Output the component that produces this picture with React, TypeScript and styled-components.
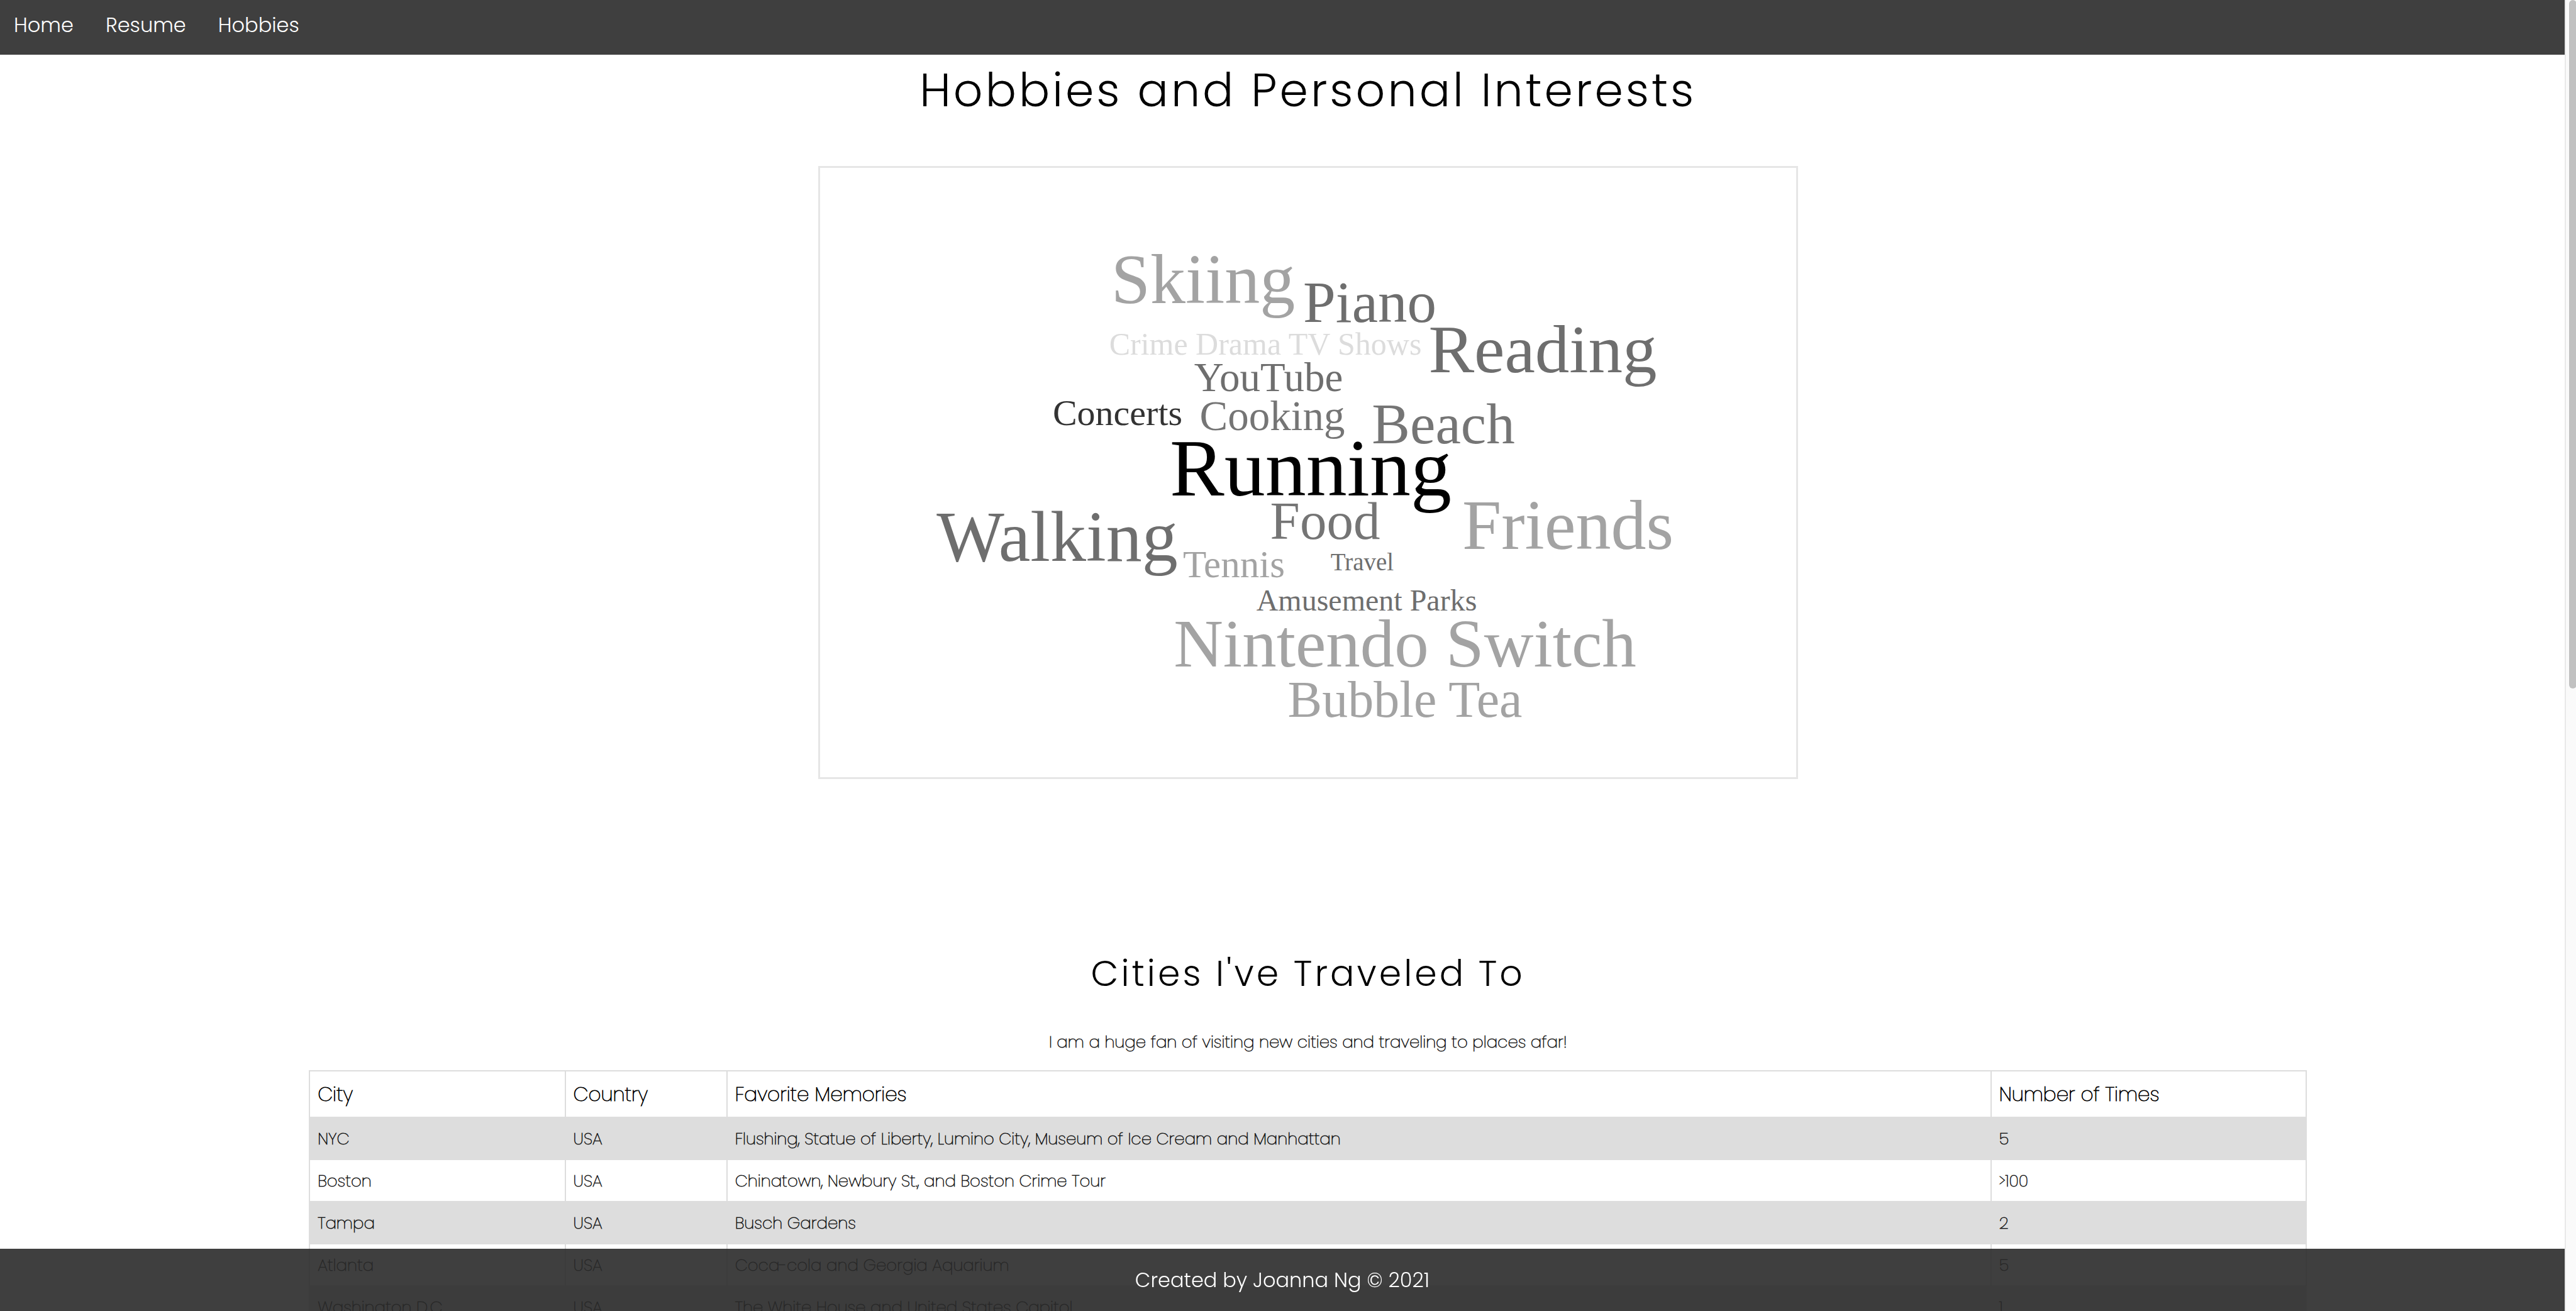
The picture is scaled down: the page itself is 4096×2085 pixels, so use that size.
import React from "react";
import styled, { createGlobalStyle } from "styled-components";

const sans = `Poppins, Inter, "Open Sans", sans-serif`;
const serif = `"Times New Roman", "Liberation Serif", serif`;
const line = "#dddddd";
const bar = "rgba(42, 42, 42, 0.9)";
const softStroke = "rgba(0, 0, 0, 0.75)";

const GlobalStyle = createGlobalStyle`
  *, *::before, *::after { box-sizing: border-box; }
  html { overflow: hidden; background: #ffffff; }
  body {
    margin: 0;
    padding-right: 18px;
    color: #000000;
    font-family: ${sans};
    font-size: 26px;
    font-weight: 300;
    line-height: 40px;
  }
`;

const Nav = styled.nav`
  display: flex;
  align-items: flex-start;
  gap: 51px;
  height: 87px;
  padding: 16px 22px;
  background: ${bar};
`;

const NavLink = styled.a`
  color: #ffffff;
  font-size: 32px;
  line-height: 48px;
  text-decoration: none;
`;

const Main = styled.main`
  display: flex;
  flex-direction: column;
  align-items: center;
  padding-left: 2%;
`;

const Title = styled.h1`
  margin: 0;
  font-size: 73px;
  font-weight: 300;
  line-height: 114px;
  letter-spacing: 4px;
`;

const CloudFrame = styled.figure`
  width: 1558px;
  max-width: 100%;
  margin: 63px 0 0;
  border: 3px solid #e6e6e6;
`;

const Cloud = styled.svg`
  display: block;
  width: 100%;
  height: auto;
  font-family: ${serif};
  font-weight: 400;
  text-anchor: middle;
`;

const Subtitle = styled.h2`
  margin: 265px 0 0;
  font-size: 57px;
  font-weight: 300;
  line-height: 88px;
  letter-spacing: 4px;
`;

const Intro = styled.p`
  margin: 45px 0 25px;
  font-weight: 100;
  -webkit-text-stroke: 1px ${softStroke};
`;

const CityTable = styled.table`
  width: 79.5%;
  table-layout: fixed;
  border-collapse: collapse;
  border: 2px solid ${line};
  text-align: left;
  font-weight: 100;
`;

const Col = styled.col<{ $share: number }>`
  width: ${(p) => p.$share}%;
`;

const Row = styled.tr`
  &:nth-child(odd) {
    background: ${line};
  }
`;

const HeadCell = styled.th`
  height: 74px;
  padding: 0 12px;
  border: 2px solid ${line};
  font-size: 31px;
  font-weight: 100;
  -webkit-text-stroke: 1px currentColor;
`;

const Cell = styled.td`
  height: 67px;
  padding: 0 12px;
  border: 2px solid ${line};
  -webkit-text-stroke: 1px ${softStroke};
`;

const Footer = styled.footer`
  position: fixed;
  left: 0;
  right: 18px;
  bottom: 0;
  height: 99px;
  padding: 24px 0;
  background: ${bar};
  color: #ffffff;
  font-size: 32px;
  line-height: 51px;
  text-align: center;
`;

const ScrollTrack = styled.div`
  position: fixed;
  top: 0;
  right: 0;
  bottom: 0;
  width: 18px;
  padding-left: 5px;
  overflow: hidden;
  border-left: 2px solid #e8e8e8;
  background: #fafafa;
`;

const ScrollThumb = styled.div`
  width: 12px;
  height: 52.5%;
  border-radius: 6px;
  background: #c1c1c1;
`;

const words = [
  { text: "Skiing", x: 610, y: 215, size: 112, color: "#a3a3a3" },
  { text: "Piano", x: 875, y: 245, size: 93, color: "#6e6e6e" },
  { text: "Reading", x: 1150, y: 325, size: 109, color: "#6e6e6e" },
  { text: "Crime Drama TV Shows", x: 709, y: 297, size: 50, color: "#dcdcdc" },
  { text: "YouTube", x: 714, y: 355, size: 65, color: "#6e6e6e" },
  { text: "Concerts", x: 474, y: 409, size: 58, color: "#333333" },
  { text: "Cooking", x: 720, y: 417, size: 67, color: "#757575" },
  { text: "Beach", x: 992, y: 438, size: 91, color: "#757575" },
  { text: "Running", x: 781, y: 521, size: 130, color: "#000000" },
  { text: "Food", x: 804, y: 590, size: 85, color: "#757575" },
  { text: "Friends", x: 1190, y: 606, size: 112, color: "#a3a3a3" },
  { text: "Walking", x: 378, y: 625, size: 114, color: "#6e6e6e" },
  { text: "Tennis", x: 659, y: 651, size: 61, color: "#a3a3a3" },
  { text: "Travel", x: 863, y: 640, size: 39, color: "#6e6e6e" },
  { text: "Amusement Parks", x: 870, y: 704, size: 48, color: "#6e6e6e" },
  { text: "Nintendo Switch", x: 931, y: 793, size: 109, color: "#a3a3a3" },
  { text: "Bubble Tea", x: 931, y: 873, size: 82, color: "#a3a3a3" },
];

const cities = [
  { city: "NYC", country: "USA", memories: "Flushing, Statue of Liberty, Lumino City, Museum of Ice Cream and Manhattan", times: "5" },
  { city: "Boston", country: "USA", memories: "Chinatown, Newbury St., and Boston Crime Tour", times: ">100" },
  { city: "Tampa", country: "USA", memories: "Busch Gardens", times: "2" },
  { city: "Atlanta", country: "USA", memories: "Coca-cola and Georgia Aquarium", times: "5" },
  { city: "Washington D.C", country: "USA", memories: "The White House and United States Capitol", times: "1" },
];

export default function App() {
  return (
    <>
      <GlobalStyle />
      <Nav>
        <NavLink href="#home">Home</NavLink>
        <NavLink href="#resume">Resume</NavLink>
        <NavLink href="#hobbies">Hobbies</NavLink>
      </Nav>
      <Main>
        <Title>Hobbies and Personal Interests</Title>
        <CloudFrame>
          <Cloud viewBox="1 0 1552 969">
            {words.map((w) => (
              <text key={w.text} x={w.x} y={w.y} fontSize={w.size} fill={w.color}>
                {w.text}
              </text>
            ))}
          </Cloud>
        </CloudFrame>
        <Subtitle>Cities I've Traveled To</Subtitle>
        <Intro>I am a huge fan of visiting new cities and traveling to places afar!</Intro>
        <CityTable>
          <colgroup>
            <Col $share={12.8} />
            <Col $share={8.1} />
            <Col $share={63.3} />
            <Col $share={15.8} />
          </colgroup>
          <thead>
            <tr>
              <HeadCell scope="col">City</HeadCell>
              <HeadCell scope="col">Country</HeadCell>
              <HeadCell scope="col">Favorite Memories</HeadCell>
              <HeadCell scope="col">Number of Times</HeadCell>
            </tr>
          </thead>
          <tbody>
            {cities.map((c) => (
              <Row key={c.city}>
                <Cell>{c.city}</Cell>
                <Cell>{c.country}</Cell>
                <Cell>{c.memories}</Cell>
                <Cell>{c.times}</Cell>
              </Row>
            ))}
          </tbody>
        </CityTable>
      </Main>
      <Footer>Created by Joanna Ng © 2021</Footer>
      <ScrollTrack>
        <ScrollThumb />
      </ScrollTrack>
    </>
  );
}
